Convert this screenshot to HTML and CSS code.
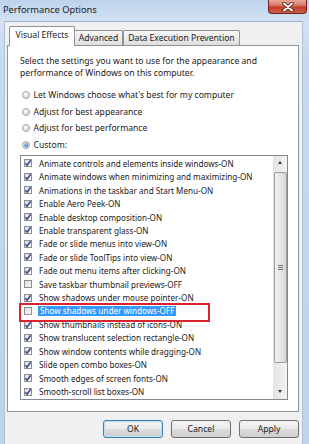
FILE: index.html
```html
<!DOCTYPE html>
<html>
<head>
    <meta charset="UTF-8">
    <title>Performance Options</title>
    <link rel="stylesheet" href="styles.css">
</head>
<body>
<div class="window">
    <div class="titlebar">
        <span class="title">Performance Options</span>
        <div class="close-btn">
            <svg class="close-x" width="14" height="10" viewBox="0 0 14 10">
                <path d="M3 1.5 L11 8.5 M11 1.5 L3 8.5" stroke="#4a1510" stroke-width="3.6" stroke-linecap="round"/>
                <path d="M3 1.5 L11 8.5 M11 1.5 L3 8.5" stroke="#ffffff" stroke-width="2" stroke-linecap="round"/>
            </svg>
        </div>
    </div>

    <div class="client">
        <div class="tabs">
            <div class="tab tab-active">Visual Effects</div>
            <div class="tab tab-advanced">Advanced</div>
            <div class="tab tab-dep">Data Execution Prevention</div>
        </div>

        <div class="panel">
            <p class="intro">Select the settings you want to use for the appearance and performance of Windows on this computer.</p>

            <div class="radios">
                <div class="radio-row"><span class="radio"></span>Let Windows choose what's best for my computer</div>
                <div class="radio-row"><span class="radio"></span>Adjust for best appearance</div>
                <div class="radio-row"><span class="radio"></span>Adjust for best performance</div>
                <div class="radio-row"><span class="radio radio-on"></span>Custom:</div>
            </div>

            <div class="listbox">
                <ul class="items" id="items"></ul>
                <div class="scrollbar">
                    <div class="sb-btn"><span class="arrow-up"></span></div>
                    <div class="sb-thumb"><span class="grip"></span></div>
                    <div class="sb-track"></div>
                    <div class="sb-btn"><span class="arrow-down"></span></div>
                </div>
                <div class="red-mark"></div>
            </div>
        </div>

        <div class="buttons">
            <button class="btn btn-default">OK</button>
            <button class="btn">Cancel</button>
            <button class="btn">Apply</button>
        </div>
    </div>
</div>

<script>
    const settings = [
        ['Animate controls and elements inside windows-ON', true],
        ['Animate windows when minimizing and maximizing-ON', true],
        ['Animations in the taskbar and Start Menu-ON', true],
        ['Enable Aero Peek-ON', true],
        ['Enable desktop composition-ON', true],
        ['Enable transparent glass-ON', true],
        ['Fade or slide menus into view-ON', true],
        ['Fade or slide ToolTips into view-ON', true],
        ['Fade out menu items after clicking-ON', true],
        ['Save taskbar thumbnail previews-OFF', false],
        ['Show shadows under mouse pointer-ON', true],
        ['Show shadows under windows-OFF', false, true],
        ['Show thumbnails instead of icons-ON', true],
        ['Show translucent selection rectangle-ON', true],
        ['Show window contents while dragging-ON', true],
        ['Slide open combo boxes-ON', true],
        ['Smooth edges of screen fonts-ON', true],
        ['Smooth-scroll list boxes-ON', true]
    ];

    const checkSvg = '<svg width="8" height="8" viewBox="0 0 8 8"><path d="M1.4 4.2 L3.1 6.2 L6.6 1.2" fill="none" stroke="#34479a" stroke-width="1.5"/></svg>';

    const items = document.getElementById('items');
    settings.forEach(function (s) {
        const li = document.createElement('li');
        li.className = 'item';
        const box = document.createElement('span');
        box.className = 'check';
        if (s[1]) box.innerHTML = checkSvg;
        const label = document.createElement('span');
        label.className = s[2] ? 'label selected' : 'label';
        label.textContent = s[0];
        li.appendChild(box);
        li.appendChild(label);
        items.appendChild(li);
    });
</script>
</body>
</html>
```

FILE: styles.css
```css
body {
    margin: 0;
    width: 309px;
    height: 444px;
    overflow: hidden;
    font-family: "Noto Sans", sans-serif;
    background-color: #c3d7ed;
}
.window {
    height: 444px;
    display: flex;
    flex-direction: column;
    background: linear-gradient(#bdd3ec, #d3e2f3 22px, #c6d9ee 60px, #bed4ec);
}
.titlebar {
    height: 21px;
    flex-shrink: 0;
    display: flex;
    align-items: flex-start;
    padding-left: 3px;
    position: relative;
}
.title {
    font-size: 9.3px;
    line-height: 20px;
    color: #1c1c1c;
}
/* window close button sits over the title bar corner */
.close-btn {
    position: absolute;
    top: 0;
    right: 2px;
    width: 39px;
    height: 14px;
    box-sizing: border-box;
    border: 1px solid #6e231b;
    border-top-width: 0;
    border-radius: 0 0 4px 4px;
    background: linear-gradient(#e9a898, #d77c69 40%, #c23d2a 56%, #cc5f4b);
}
.close-x {
    position: absolute;
    left: 12px;
    top: 2px;
}

/* client area */
.client {
    flex: 1;
    margin: 0 6px 0 4px;
    padding: 0 3px 0 2px;
    background-color: #f0f0f0;
    border-top: 1px solid #a3b4c8;
    border-left: 1px solid #b0c0d2;
    border-right: 1px solid #b0c0d2;
    display: flex;
    flex-direction: column;
}
.tabs {
    display: flex;
    align-items: flex-end;
    height: 18px;
    margin-top: 5px;
    padding-left: 2px;
    position: relative;
    z-index: 1;
}
.tab {
    font-size: 8.6px;
    color: #1a1a1a;
    height: 14px;
    line-height: 14px;
    text-align: center;
    border: 1px solid #8e929b;
    border-bottom: none;
    border-radius: 2px 2px 0 0;
    background: linear-gradient(#f7f7f7, #ebebeb 50%, #dedede);
    box-sizing: content-box;
}
.tab-active {
    width: 64px;
    height: 19px;
    line-height: 17px;
    background: #ffffff;
    margin-bottom: -1px;
    position: relative;
    z-index: 2;
}
.tab-advanced {
    width: 47px;
    margin-left: -1px;
}
.tab-dep {
    width: 115px;
}
.panel {
    background-color: #ffffff;
    border: 1px solid #8e929b;
    padding: 10px 10px 11px 12px;
}
.intro {
    margin: 0;
    font-size: 8.6px;
    line-height: 11.6px;
    color: #1a1a1a;
    width: 250px;
}
.radios {
    margin-top: 7.5px;
}
.radio-row {
    height: 16.7px;
    display: flex;
    align-items: center;
    font-size: 8.6px;
    color: #1a1a1a;
}
.radio {
    width: 6px;
    height: 6px;
    margin-left: 2px;
    margin-right: 3.5px;
    border: 1px solid #a0a0a0;
    border-radius: 50%;
    background: radial-gradient(circle at 40% 35%, #ffffff, #d8d8d8 75%);
    display: flex;
    align-items: center;
    justify-content: center;
}
.radio-on::after {
    content: "";
    width: 4px;
    height: 4px;
    border-radius: 50%;
    background: radial-gradient(circle at 35% 35%, #86c6f7, #1f5ea8);
}

/* list of check boxes */
.listbox {
    margin-top: 1.5px;
    width: 266px;
    height: 243px;
    border: 1px solid #828790;
    display: flex;
    position: relative;
}
.items {
    flex: 1;
    list-style: none;
    margin: 0;
    padding: 0.6px 0 0 3px;
}
.item {
    height: 13.45px;
    display: flex;
    align-items: center;
    font-size: 8.15px;
    color: #1a1a1a;
    white-space: nowrap;
}
.check {
    width: 6px;
    height: 6px;
    border: 1px solid #8f8f8f;
    background: linear-gradient(135deg, #dcdcdc, #fbfbfb);
    margin-right: 7px;
    display: flex;
    align-items: center;
    justify-content: center;
}
.check svg {
    display: block;
    flex-shrink: 0;
}
.label.selected {
    background-color: #3399ff;
    color: #ffffff;
    line-height: 9.5px;
    padding: 0 2px;
    margin-left: -1px;
}
.scrollbar {
    width: 14px;
    display: flex;
    flex-direction: column;
    background: linear-gradient(90deg, #e4e4e4, #f2f2f2);
}
.sb-btn {
    height: 14px;
    display: flex;
    align-items: center;
    justify-content: center;
}
.arrow-up {
    border-left: 2.5px solid transparent;
    border-right: 2.5px solid transparent;
    border-bottom: 3px solid #3a3a3a;
}
.arrow-down {
    border-left: 2.5px solid transparent;
    border-right: 2.5px solid transparent;
    border-top: 3px solid #3a3a3a;
}
.sb-thumb {
    height: 189px;
    margin: 2px 0 0 1px;
    width: 11px;
    border: 1px solid #9d9d9d;
    border-radius: 2px;
    background: linear-gradient(90deg, #f4f4f4, #e4e4e4 50%, #d6d6d6);
    display: flex;
    align-items: center;
    justify-content: center;
}
.grip {
    width: 5px;
    height: 5px;
    background: repeating-linear-gradient(#707070 0 1px, transparent 1px 2px);
}
.sb-track {
    flex: 1;
}
.red-mark {
    position: absolute;
    left: -2px;
    top: 147px;
    width: 187px;
    height: 15px;
    border: 2px solid #d9242f;
}

/* bottom buttons */
.buttons {
    display: flex;
    justify-content: flex-end;
    gap: 8px;
    margin-top: 8px;
}
.btn {
    width: 60px;
    height: 18px;
    padding: 0;
    font-family: "Noto Sans", sans-serif;
    font-size: 8.6px;
    color: #1a1a1a;
    border: 1px solid #707070;
    border-radius: 3px;
    background: linear-gradient(#f2f2f2, #ebebeb 50%, #dddddd 50%, #cfcfcf);
}
.btn-default {
    border-color: #3c7fb1;
    box-shadow: inset 0 0 0 1px #b8e2f8;
}
```
